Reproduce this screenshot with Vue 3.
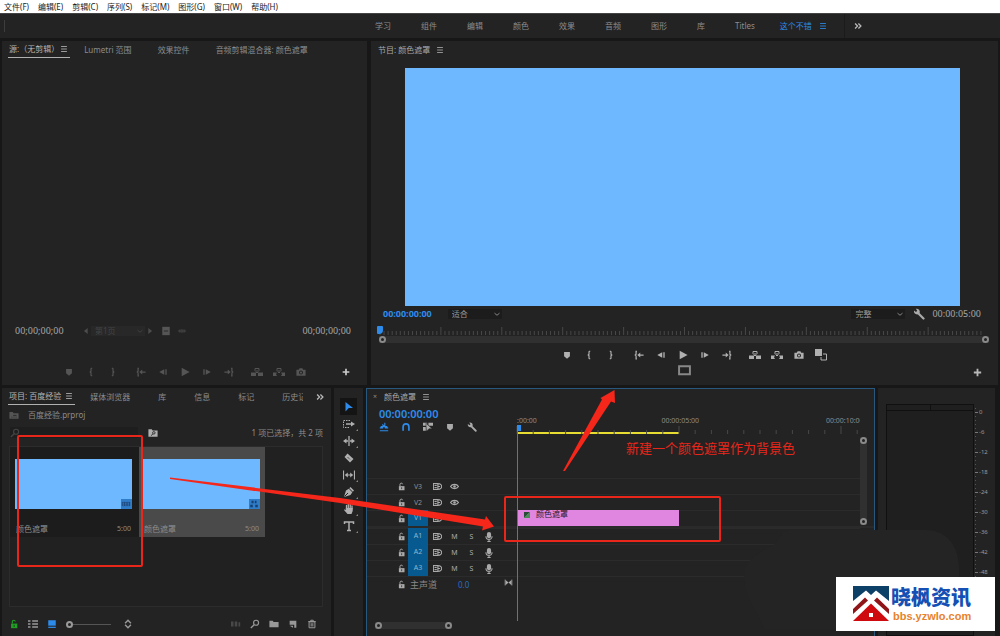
<script setup>
import { h } from 'vue'

const menus = ['文件(F)', '编辑(E)', '剪辑(C)', '序列(S)', '标记(M)', '图形(G)', '窗口(W)', '帮助(H)']
const workspaces = ['学习', '组件', '编辑', '颜色', '效果', '音频', '图形', '库', 'Titles']

const Icon = (props) =>
  h('svg', { class: 'icon', viewBox: '0 0 12 12', 'aria-hidden': 'true' }, [h('use', { href: '#i-' + props.name })])
Icon.props = ['name']

const transport = [
  [['marker', '添加标记'], ['in', '标记入点'], ['out', '标记出点']],
  [['goin', '转到入点'], ['back', '后退一帧'], ['play', '播放'], ['fwd', '前进一帧'], ['goout', '转到出点']],
  [['lift', '提升'], ['extract', '提取'], ['camera', '导出帧']],
]
const tools = [
  ['select', '选择工具'], ['trackselect', '向前选择轨道工具'], ['ripple', '波纹编辑工具'], ['razor', '剃刀工具'],
  ['slip', '外滑工具'], ['pen', '钢笔工具'], ['hand', '手形工具'], ['type', '文字工具'],
]
const clips = [
  { name: '颜色遮罩', time: '5:00', badge: 'strip', active: false },
  { name: '颜色遮罩', time: '5:00', badge: 'seq', active: true },
]
const videoTracks = [{ n: 'V3' }, { n: 'V2' }, { n: 'V1', on: true }]
const audioTracks = ['A1', 'A2', 'A3']
const levels = ['0', '-6', '-12', '-18', '-24', '-30', '-36', '-42', '-48', '-54']
const minor = Array.from({ length: 149 }, (_, i) => i)
const seconds = Array.from({ length: 22 }, (_, i) => i)
</script>

<template>
  <div class="app">
    <svg class="defs" aria-hidden="true">
      <symbol id="i-menu" viewBox="0 0 12 12"><path d="M2.500 3h7M2.500 6h7M2.500 9h7" stroke="currentColor" fill="none" /></symbol>
      <symbol id="i-more" viewBox="0 0 12 12"><path d="M2.500 3l3 3-3 3M6.500 3l3 3-3 3" stroke="currentColor" stroke-width="1.500" fill="none" /></symbol>
      <symbol id="i-marker" viewBox="0 0 12 12"><path d="M2.500 2.500h7V7.500L6 10.500 2.500 7.500z" fill="currentColor" /></symbol>
      <symbol id="i-in" viewBox="0 0 12 12"><path d="M7.500 1.500H6.500L6 2V5L5 6l1 1v3l.5.5h1" stroke="currentColor" stroke-width="1.400" fill="none" /></symbol>
      <symbol id="i-out" viewBox="0 0 12 12"><path d="M4.500 1.500h1l.5.5V5l1 1-1 1v3l-.5.5h-1" stroke="currentColor" stroke-width="1.400" fill="none" /></symbol>
      <symbol id="i-goin" viewBox="0 0 12 12"><path d="M3.500 1.500H2.500V5L1.500 6l1 1v3.500h1M6 6h5.500" stroke="currentColor" stroke-width="1.500" fill="none" /><path d="M4 6l3.500-3v6z" fill="currentColor" /></symbol>
      <symbol id="i-goout" viewBox="0 0 12 12"><path d="M8.500 1.500h1V5l1 1-1 1v3.500h-1M.5 6H6" stroke="currentColor" stroke-width="1.500" fill="none" /><path d="M8 6L4.500 3v6z" fill="currentColor" /></symbol>
      <symbol id="i-back" viewBox="0 0 12 12"><path d="M1.500 6L7.500 2.800v6.400zM8.800 2.800h1.600v6.400H8.800z" fill="currentColor" /></symbol>
      <symbol id="i-fwd" viewBox="0 0 12 12"><path d="M10.500 6L4.500 2.800v6.400zM1.600 2.800h1.600v6.400H1.600z" fill="currentColor" /></symbol>
      <symbol id="i-play" viewBox="0 0 12 12"><path d="M2 1l9.500 5L2 11z" fill="currentColor" /></symbol>
      <symbol id="i-lift" viewBox="0 0 12 12"><path d="M0 6.500h5V10H0zM7 6.500h5V10H7z" fill="currentColor" /><path d="M4 5V2.500h4V5M6 4v3M4.500 5.500L6 7l1.500-1.500" stroke="currentColor" fill="none" /></symbol>
      <symbol id="i-extract" viewBox="0 0 12 12"><path d="M0 6.500h4L3 8.200 4 10H0zM12 6.500H8l1 1.700L8 10h4z" fill="currentColor" /><path d="M4 5V2.500h4V5M6 4v3M4.500 5.500L6 7l1.500-1.500" stroke="currentColor" fill="none" /></symbol>
      <symbol id="i-camera" viewBox="0 0 12 12"><path fill-rule="evenodd" d="M.5 3.200h2.800L4.300 1.500h3.400l1 1.700h2.800v7.300H.5zM6 4.300a2.400 2.400 0 100 4.800 2.400 2.400 0 000-4.800z" fill="currentColor" /><circle cx="6" cy="6.700" r="1.300" fill="currentColor" /></symbol>
      <symbol id="i-compare" viewBox="0 0 12 12"><path d="M0 0h7v7H0z" fill="currentColor" /><path d="M8 5h3.500v6H6V8" stroke="currentColor" fill="none" /></symbol>
      <symbol id="i-monitor" viewBox="0 0 12 12"><path d="M1 2h10v7.500H1z" stroke="currentColor" stroke-width="1.800" fill="none" /></symbol>
      <symbol id="i-plus" viewBox="0 0 12 12"><path d="M6 2v8M2 6h8" stroke="currentColor" stroke-width="2" /></symbol>
      <symbol id="i-chevron" viewBox="0 0 12 12"><path d="M3 5l3 2.500L9 5" stroke="currentColor" fill="none" /></symbol>
      <symbol id="i-left" viewBox="0 0 12 12"><path d="M8 2.500v7L3.500 6z" fill="currentColor" /></symbol>
      <symbol id="i-right" viewBox="0 0 12 12"><path d="M4 2.500v7L8.500 6z" fill="currentColor" /></symbol>
      <symbol id="i-film" viewBox="0 0 12 12"><path d="M1.500 1h9v10h-9z" fill="currentColor" /><path d="M3.500 6h5" stroke="#232323" /></symbol>
      <symbol id="i-wave" viewBox="0 0 12 12"><path d="M1 6h10M3.500 4v4M6 3.500v5M8.500 4v4" stroke="currentColor" /></symbol>
      <symbol id="i-wrench" viewBox="0 0 12 12"><path d="M5 5l5.500 5.500" stroke="currentColor" stroke-width="2.200" stroke-linecap="round" /><path d="M1 2.500l2 1.500 1.200-1.200L2.800.8C5 .3 7.200 1.800 6.800 4.500L5 6.300C2.500 6.800.4 5 1 2.500z" fill="currentColor" /></symbol>
      <symbol id="i-select" viewBox="0 0 12 12"><path d="M2.500 1l7.500 6H5.800L2.500 10.500z" fill="currentColor" /></symbol>
      <symbol id="i-trackselect" viewBox="0 0 12 12"><path d="M7 2.500H.5v7H7" stroke="currentColor" stroke-dasharray="1.500 1" fill="none" /><path d="M3 6h6" stroke="currentColor" stroke-width="1.500" /><path d="M8 3.500L12 6 8 8.500z" fill="currentColor" /></symbol>
      <symbol id="i-ripple" viewBox="0 0 12 12"><path d="M6 1v10M2 6h3M7 6h3" stroke="currentColor" stroke-width="1.300" /><path d="M0 6l3.500-2.500v5zM12 6L8.500 3.500v5z" fill="currentColor" /></symbol>
      <symbol id="i-razor" viewBox="0 0 12 12"><path d="M4.500 1.500l6 5.500-3.500 3.500L1.500 5z" fill="currentColor" /><path d="M4.500 5l3 3" stroke="#232323" stroke-dasharray="1 1" /></symbol>
      <symbol id="i-slip" viewBox="0 0 12 12"><path d="M.5 1.500v9M11.500 1.500v9M3 6h6" stroke="currentColor" stroke-width="1.200" /><path d="M1.800 6l3-2.500v5zM10.200 6l-3-2.500v5z" fill="currentColor" /></symbol>
      <symbol id="i-pen" viewBox="0 0 12 12"><path d="M7.500 1L11 4.500 9.800 5.700 6.300 2.200zM5.800 2.700l3.500 3.500L7.500 9 1 11l2-6.500z" fill="currentColor" /><path d="M1.500 10.500L5 7" stroke="#232323" /></symbol>
      <symbol id="i-hand" viewBox="0 0 12 12"><path d="M3.500 6V2.500M5.300 6V1.500M7.200 6V1.500M9 6V3" stroke="currentColor" stroke-width="1.300" stroke-linecap="round" /><path d="M2.800 5h6.900v3L8.500 11h-4L1 7l.8-.7L3 7z" fill="currentColor" /></symbol>
      <symbol id="i-type" viewBox="0 0 12 12"><path d="M1.500 4V2h9v2M6 2v8.500M4 10.500h4" stroke="currentColor" stroke-width="1.500" fill="none" /></symbol>
      <symbol id="i-lock" viewBox="0 0 12 12"><path d="M2.500 5.500h7.500V11H2.500z" fill="currentColor" /><path d="M4 5.500V3c0-2 3.500-2 3.500 0" stroke="currentColor" stroke-width="1.300" fill="none" /><path d="M6.200 7v2.500" stroke="#232323" /></symbol>
      <symbol id="i-sync" viewBox="0 0 12 12"><path d="M.5 2h6v8h-6zM2 4.500h3M2 7.500h3M7 2.500h2l2.500 2v3L9 9.500H7M7 6h2.500" stroke="currentColor" stroke-width="1.500" fill="none" /></symbol>
      <symbol id="i-eye" viewBox="0 0 12 12"><path d="M.7 6C3 2.300 9 2.300 11.300 6 9 9.700 3 9.700.7 6z" stroke="currentColor" stroke-width="1.600" fill="none" /><circle cx="6" cy="6" r="1.700" fill="currentColor" /></symbol>
      <symbol id="i-mic" viewBox="0 0 12 12"><rect x="3.500" y="0" width="5" height="7.500" rx="2.500" fill="currentColor" /><path d="M2.300 5c0 5 7.400 5 7.400 0M6 8v3M4 11.300h4" stroke="currentColor" stroke-width="1.300" fill="none" /></symbol>
      <symbol id="i-bowtie" viewBox="0 0 12 12"><path d="M1.500 2v8M10.500 2v8" stroke="currentColor" /><path d="M2 2.500L6 6 2 9.500zM10 2.500L6 6l4 3.500z" fill="currentColor" /></symbol>
      <symbol id="i-nest" viewBox="0 0 12 12"><path d="M1 7h4M7 7h4M1 10.500h10M4 3l3 3M7 1v4M2 5.500h8" stroke="currentColor" stroke-width="1.300" /></symbol>
      <symbol id="i-magnet" viewBox="0 0 12 12"><path d="M2.500 10.500V6c0-5 7-5 7 0v4.500" stroke="currentColor" stroke-width="2" fill="none" /></symbol>
      <symbol id="i-link" viewBox="0 0 12 12"><path d="M0 1h5v3.500H0zM6.500 1H12v3.500H6.500zM0 6h3.500v4.500H0z" fill="currentColor" /><path d="M3.500 1.500l7.500 6.500H7.500L4 11z" fill="currentColor" stroke="#232323" stroke-width=".6" /></symbol>
      <symbol id="i-bin" viewBox="0 0 12 12"><path d="M.5 2.500h4l1 1.500h6v6.500H.5z" fill="currentColor" /><path d="M3 8.500h1M5.500 8.500h1M8 8.500h1M5 6.500h4" stroke="#232323" /></symbol>
      <symbol id="i-findbin" viewBox="0 0 12 12"><path d="M.5 1.500h4l1 1.500h6v7.500H.5z" fill="currentColor" /><circle cx="7" cy="5.800" r="1.500" stroke="#232323" fill="none" /><path d="M6 7L3.500 9.300" stroke="#232323" /></symbol>
      <symbol id="i-search" viewBox="0 0 12 12"><circle cx="7.300" cy="4.500" r="3" stroke="currentColor" stroke-width="1.400" fill="none" /><path d="M5 6.800L1 10.800" stroke="currentColor" stroke-width="1.600" /></symbol>
      <symbol id="i-list" viewBox="0 0 12 12"><path d="M0 2.500h3M0 6h3M0 9.500h3M5 2.500h7M5 6h7M5 9.500h7" stroke="currentColor" stroke-width="1.800" /></symbol>
      <symbol id="i-iconview" viewBox="0 0 12 12"><path d="M1.500 1.500h9v6.500h-9z" fill="currentColor" /><path d="M1.500 10h9" stroke="currentColor" stroke-width="1.500" /></symbol>
      <symbol id="i-sort" viewBox="0 0 12 12"><path d="M2.500 5L6 1.500 9.500 5M2.500 7L6 10.500 9.500 7" stroke="currentColor" stroke-width="1.700" fill="none" /></symbol>
      <symbol id="i-auto" viewBox="0 0 12 12"><path d="M0 3h3v6H0zM4.500 3h3v6h-3zM9 4h2v5H9z" fill="currentColor" /></symbol>
      <symbol id="i-folder" viewBox="0 0 12 12"><path d="M.5 2h4l1 1.500h6V10H.5z" fill="currentColor" /></symbol>
      <symbol id="i-new" viewBox="0 0 12 12"><path d="M2 2h8v8.500H7.500V7H2z" fill="currentColor" /><path d="M2 8l4 2.500V8z" fill="currentColor" /></symbol>
      <symbol id="i-trash" viewBox="0 0 12 12"><path d="M1.500 3h9M4.500 2.500V1.500h3v1M2.500 3.500h7v7h-7zM5 5v4M7 5v4" stroke="currentColor" stroke-width="1.200" fill="none" /></symbol>
      <symbol id="i-strip" viewBox="0 0 12 12"><path d="M1 3.500h10v5H1z" fill="#1d4c82" /><path d="M2 5h1.500M5 5h1.500M8 5h1.500M2 7.200h1.500M5 7.200h1.500M8 7.200h1.500" stroke="#4a90d8" /></symbol>
      <symbol id="i-seq" viewBox="0 0 12 12"><path d="M1.500 7h3v3h-3zM7.500 7h3v3h-3zM3 2h2.500v3H3zM7 2h2v3H7z" fill="#173f70" /></symbol>
    </svg>

    <nav class="menubar">
      <button v-for="m in menus" :key="m">{{ m }}</button>
    </nav>

    <header class="workspace">
      <div class="grip"></div>
      <nav class="spaces">
        <button v-for="w in workspaces" :key="w">{{ w }}</button>
        <button class="current">这个不错 <Icon name="menu" /></button>
        <button class="overflow" aria-label="更多工作区"><Icon name="more" /></button>
      </nav>
    </header>

    <main class="main">
      <section class="upper">
        <section class="panel source">
          <div class="tabs">
            <button class="tab active">源:（无剪辑）<Icon name="menu" /></button>
            <button class="tab">Lumetri 范围</button>
            <button class="tab">效果控件</button>
            <button class="tab">音频剪辑混合器: 颜色遮罩</button>
          </div>
          <div class="grow"></div>
          <div class="info">
            <span class="tc">00;00;00;00</span>
            <div class="pager">
              <button aria-label="上一页"><Icon name="left" /></button>
              <label class="pick"><select aria-label="页" disabled><option>第1页</option></select><Icon name="chevron" /></label>
              <button aria-label="下一页"><Icon name="right" /></button>
              <button class="film" aria-label="仅视频"><Icon name="film" /></button>
              <button aria-label="仅音频"><Icon name="wave" /></button>
            </div>
            <span class="tc">00;00;00;00</span>
          </div>
          <div class="transport">
            <div v-for="(g, i) in transport" :key="i" class="group">
              <button v-for="b in g" :key="b[0]" :aria-label="b[1]" :class="b[0]"><Icon :name="b[0]" /></button>
            </div>
            <button class="add" aria-label="按钮编辑器"><Icon name="plus" /></button>
          </div>
        </section>

        <section class="panel program">
          <div class="tabs">
            <button class="tab">节目: 颜色遮罩 <Icon name="menu" /></button>
          </div>
          <div class="video"></div>
          <div class="info">
            <span class="tc blue">00:00:00:00</span>
            <label class="pick fit"><select aria-label="缩放级别"><option>适合</option></select><Icon name="chevron" /></label>
            <div class="grow"></div>
            <label class="pick"><select aria-label="播放分辨率"><option>完整</option></select><Icon name="chevron" /></label>
            <button class="set" aria-label="设置"><Icon name="wrench" /></button>
            <span class="tc">00:00:05:00</span>
          </div>
          <div class="ruler">
            <svg class="ticks" aria-hidden="true">
              <line v-for="i in minor" :key="i" :x1="i / 1.49 + '%'" :x2="i / 1.49 + '%'" :y1="i % 15 ? 4 : 0" y2="8" />
            </svg>
            <i class="head"></i>
          </div>
          <div class="zoombar"><i class="knob"></i><i class="knob"></i></div>
          <div class="transport">
            <div v-for="(g, i) in transport" :key="i" class="group">
              <button v-for="b in g" :key="b[0]" :aria-label="b[1]" :class="b[0]"><Icon :name="b[0]" /></button>
              <button v-if="i === 2" class="compare" aria-label="比较视图"><Icon name="compare" /></button>
            </div>
          </div>
          <div class="second">
            <button aria-label="切换显示"><Icon name="monitor" /></button>
            <button class="add" aria-label="按钮编辑器"><Icon name="plus" /></button>
          </div>
        </section>
      </section>

      <section class="lower">
        <section class="panel project">
          <div class="tabs">
            <button class="tab active">项目: 百度经验 <Icon name="menu" /></button>
            <button class="tab">媒体浏览器</button>
            <button class="tab">库</button>
            <button class="tab">信息</button>
            <button class="tab">标记</button>
            <button class="tab cut">历史记录</button>
            <button class="overflow" aria-label="更多面板"><Icon name="more" /></button>
          </div>
          <div class="path"><Icon name="bin" /><span>百度经验.prproj</span></div>
          <div class="filter">
            <label class="search"><Icon name="search" /><input type="text" aria-label="搜索" /></label>
            <button aria-label="查找素材箱"><Icon name="findbin" /></button>
            <span class="count">1 项已选择，共 2 项</span>
          </div>
          <div class="items">
            <article v-for="(c, i) in clips" :key="i" class="item" :class="{ active: c.active }">
              <div class="thumb"><span class="badge"><Icon :name="c.badge" /></span></div>
              <div class="meta"><span>{{ c.name }}</span><span class="dur">{{ c.time }}</span></div>
            </article>
          </div>
          <div class="footer">
            <button class="green" aria-label="可写"><Icon name="lock" /></button>
            <button aria-label="列表视图"><Icon name="list" /></button>
            <button class="blue" aria-label="图标视图"><Icon name="iconview" /></button>
            <input type="range" min="0" max="100" value="0" aria-label="缩略图大小" />
            <button aria-label="排序图标"><Icon name="sort" /></button>
            <div class="grow"></div>
            <button class="dim" aria-label="自动匹配序列"><Icon name="auto" /></button>
            <button aria-label="查找"><Icon name="search" /></button>
            <button aria-label="新建素材箱"><Icon name="folder" /></button>
            <button aria-label="新建项"><Icon name="new" /></button>
            <button aria-label="清除"><Icon name="trash" /></button>
          </div>
        </section>

        <aside class="panel tools">
          <button v-for="(t, i) in tools" :key="t[0]" :aria-label="t[1]" :class="{ active: i === 0, sub: i !== 0 && i !== 3 }"><Icon :name="t[0]" /></button>
        </aside>

        <section class="panel timeline">
          <div class="tabs">
            <span class="close">×</span>
            <button class="tab">颜色遮罩 <Icon name="menu" /></button>
          </div>
          <div class="tl-top">
            <div class="tl-ctl">
              <span class="tc blue">00:00:00:00</span>
              <div class="toggles">
                <button class="blue" aria-label="嵌套序列"><Icon name="nest" /></button>
                <button class="blue" aria-label="对齐"><Icon name="magnet" /></button>
                <button aria-label="链接选择项"><Icon name="link" /></button>
                <button aria-label="添加标记"><Icon name="marker" /></button>
                <button aria-label="时间轴显示设置"><Icon name="wrench" /></button>
              </div>
            </div>
            <div class="tl-ruler">
              <div class="times"><span>:00:00</span><span>00:00:05:00</span><span>00:00:10:00</span></div>
              <svg class="ticks" aria-hidden="true">
                <line v-for="i in seconds" :key="i" :x1="i * 4.723 + '%'" :x2="i * 4.723 + '%'" :y1="i % 10 ? 4 : 0" y2="8" />
              </svg>
              <div class="work"></div>
              <p class="note">新建一个颜色遮罩作为背景色</p>
            </div>
          </div>
          <div class="tracks">
            <div v-for="t in videoTracks" :key="t.n" class="track">
              <div class="hd">
                <button aria-label="锁定"><Icon name="lock" /></button>
                <button class="name" :class="{ on: t.on }">{{ t.n }}</button>
                <button aria-label="同步锁定"><Icon name="sync" /></button>
                <button aria-label="切换轨道输出"><Icon name="eye" /></button>
              </div>
              <div class="lane"><div v-if="t.on" class="clip"><b></b><span>颜色遮罩</span></div></div>
            </div>
            <div class="split"></div>
            <div v-for="t in audioTracks" :key="t" class="track">
              <div class="hd">
                <button aria-label="锁定"><Icon name="lock" /></button>
                <button class="name on">{{ t }}</button>
                <button aria-label="同步锁定"><Icon name="sync" /></button>
                <button>M</button>
                <button>S</button>
                <button class="mic" aria-label="画外音录制"><Icon name="mic" /></button>
              </div>
              <div class="lane"></div>
            </div>
            <div class="track">
              <div class="hd master">
                <button aria-label="锁定"><Icon name="lock" /></button>
                <span>主声道</span>
                <span class="gain">0.0</span>
                <button aria-label="折叠"><Icon name="bowtie" /></button>
              </div>
              <div class="lane"></div>
            </div>
          </div>
          <div class="grow"></div>
          <div class="tl-scroll"><div class="thumbbar"><i class="knob"></i><i class="knob"></i></div></div>
          <div class="playhead"></div>
          <div class="vscroll"><i class="knob"></i><i class="knob"></i></div>
        </section>

        <section class="panel meters">
          <div class="meter"><div class="peaks"><i></i><i></i></div></div>
          <div class="scale"><span v-for="l in levels" :key="l">{{ l }}</span></div>
        </section>
      </section>
    </main>

    <svg class="overlay" viewBox="0 0 1000 636" preserveAspectRatio="none" aria-hidden="true">
      <path d="M790 530H925C950 530 960 550 959 572V629H764C758 610 744 600 744 575C744 558 765 550 775 544C780 536 784 530 790 530z" fill="#242424" />
      <g fill="none" stroke="#e8261a" stroke-width="2">
        <rect x="18" y="436" width="124" height="130" rx="1" />
        <rect x="505" y="497" width="215" height="44" rx="1" />
      </g>
      <g fill="#f5261a">
        <path d="M170 477.500L340 498 485 519.500 486 516 494 526.500 482 530.500 483 526.500 340 503 170 479z" />
        <path d="M563 471L602 399.500 600.500 398 614.500 390 615 403 611 401.500 565 471z" />
      </g>
    </svg>

    <aside class="brand">
      <svg viewBox="0 0 36 36" aria-hidden="true">
        <path d="M0 0h36v15L23 4.500 18 9 13 4.500 0 15z" fill="#0d4067" />
        <path d="M0 23L12 11.500l3 3L0 28zM36 23L24 11.500l-3 3L36 28z" fill="#8f1518" />
        <path d="M0 35L18 17.500 36 35z" fill="#cf0a0f" />
        <path d="M16 27h4v4h-4z" fill="#fff" />
      </svg>
      <div><strong>晓枫资讯</strong><a href="#">bbs.yzwlo.com</a></div>
    </aside>
  </div>
</template>

<style>
body {
  margin: 0;
  background: #161616;
}
</style>

<style scoped>
.app {
  position: relative;
  display: flex;
  flex-direction: column;
  height: 100vh;
  min-height: 600px;
  overflow: hidden;
  background: #171717;
  color: #8c8c8c;
  font: 8px/12px "Noto Sans", "Noto Sans CJK SC", sans-serif;
}
.defs { position: absolute; width: 0; height: 0; }
:deep(.icon) { width: 10px; height: 10px; flex: none; display: block; }
button {
  display: flex;
  align-items: center;
  justify-content: center;
  padding: 0;
  border: 0;
  background: none;
  color: inherit;
  font: inherit;
  white-space: nowrap;
}
.grow { flex: 1; }

.menubar {
  display: flex;
  gap: 9px;
  height: 13px;
  padding-left: 4px;
  background: #fff;
  color: #222;
}

.workspace {
  display: grid;
  grid-template-columns: 369fr 629fr;
  height: 25px;
  padding: 0 0 0 2px;
  border-top: 1px solid #444;
  box-sizing: border-box;
  background: #232323;
}
.grip { width: 1px; height: 12px; margin: 6px 2px; background: #3d3d3d; }
.spaces { display: flex; align-items: center; gap: 30px; padding-left: 4px; }
.spaces .current { margin-left: -5px; color: #2d8ceb; gap: 6px; }
.spaces .overflow { height: 24px; margin-left: -14px; padding-left: 8px; border-left: 1px solid #1b1b1b; color: #bbb; }

.main {
  flex: 1;
  min-height: 0;
  display: grid;
  grid-template-rows: minmax(0, 344fr) minmax(0, 248fr);
  gap: 3px;
  padding-top: 3px;
}
.upper { display: grid; grid-template-columns: minmax(0, 365fr) minmax(0, 627fr); gap: 4px; padding: 0 2px; }
.lower { display: grid; grid-template-columns: minmax(0, 329fr) 29px minmax(0, 509fr) 117px; gap: 3px; padding: 0 5px 0 2px; }
.panel { display: flex; flex-direction: column; min-width: 0; min-height: 0; background: #232323; }

.tabs { display: flex; height: 18px; flex: none; padding: 0 6px; }
.tab { position: relative; height: 17px; padding: 0 1px; gap: 3px; }
.tab.active { color: #b4b4b4; border-bottom: 1px solid #b0b0b0; }
.source .tab { margin-right: 13px; }
.source .tab.active { gap: 0; }
.source .tab:nth-child(n + 2) { margin-right: 24px; }
.program .tab, .timeline .tab { color: #a8a8a8; gap: 5px; }
.project .tab.active { margin-right: 14px; }
.project .tab:nth-child(n + 2) { margin-right: 26px; }
.project .tab.cut { width: 25px; margin-right: 12px; overflow: hidden; justify-content: flex-start; }
.overflow { color: #bbb; }

.info { display: flex; align-items: center; height: 16px; flex: none; }
.tc { font-size: 9px; font-weight: 500; color: #999; }
.blue { color: #2d8ceb; }
.tc.blue { font-weight: 700; }
.pick { display: flex; align-items: center; width: 54px; height: 10px; background: #1c1c1c; color: #999; }
.pick select {
  flex: 1;
  min-width: 0;
  height: 10px;
  padding: 0 0 0 4px;
  border: 0;
  appearance: none;
  background: none;
  color: inherit;
  font: inherit;
  line-height: 10px;
  opacity: 1;
}
.source .info { justify-content: space-between; margin-bottom: 24px; padding: 0 16px 0 13px; }
.pager { display: flex; align-items: center; margin-right: 98px; color: #4c4c4c; }
.pager .pick { background: #282828; color: #444; }
.pager .film { margin: 0 6px; color: #555; }

.transport { position: relative; display: flex; justify-content: center; gap: 6px; height: 18px; flex: none; color: #b0b0b0; }
.group { display: flex; }
.group button { width: 22px; }
.lift :deep(.icon), .extract :deep(.icon), .compare :deep(.icon) { width: 12px; height: 12px; }
.source .transport { margin-bottom: 4px; color: #555; }
.add { position: absolute; top: 4px; right: 16px; color: #ccc; }

.video { flex: 1; margin: 9px 38px 0 34px; background: #6eb8ff; }
.program .info { padding: 0 17px 0 12px; }
.fit { margin-left: 16px; }
.set { margin: 0 7px 0 8px; color: #aaa; }
.program .set :deep(.icon) { width: 12px; height: 12px; }
.ruler { position: relative; height: 9px; margin: 5px 13px 0 9px; flex: none; }
.ticks { display: block; width: 100%; height: 8px; overflow: visible; }
.ticks line { stroke: #484848; stroke-width: 1; }
.head { position: absolute; left: -3px; top: -1px; width: 6px; height: 8px; border-radius: 1px 1px 4px 1px; background: #2d8ceb; }
.zoombar { display: flex; justify-content: space-between; align-items: center; height: 7px; margin: 0 9px 3px 8px; flex: none; background: #303030; }
.knob { width: 3px; height: 3px; border: 2px solid #8a8a8a; border-radius: 50%; background: #232323; }
.program .transport { padding-left: 18px; }
.second { position: relative; display: flex; justify-content: center; align-items: flex-start; height: 21px; flex: none; color: #888; }
.second :deep(.icon) { width: 13px; height: 13px; }
.second .add { top: 3px; right: 15px; color: #b8b8b8; }
.second .add :deep(.icon) { width: 11px; height: 11px; }

.path { display: flex; align-items: center; gap: 9px; height: 18px; padding-left: 7px; flex: none; }
.path :deep(.icon) { color: #555; }
.filter { display: flex; align-items: center; height: 17px; padding: 0 8px; flex: none; }
.filter button { margin-left: 10px; color: #b0b0b0; }
.search { display: flex; align-items: center; gap: 2px; width: 128px; height: 11px; background: #1e1e1e; color: #444; }
.search input { flex: 1; min-width: 0; height: 11px; padding: 0; border: 0; outline: 0; background: none; color: #999; font: inherit; }
.count { margin-left: auto; }
.items { display: flex; flex: 1; min-height: 0; align-items: flex-start; margin: 5px 8px 5px 7px; border: 1px solid #2c2c2c; background: #212121; }
.item { flex: 0 0 129px; box-sizing: border-box; height: 90px; padding: 12px 7px 0 5px; background: #1c1c1c; }
.item.active { flex-basis: 126px; padding: 12px 5px 0 4px; background: #4a4a4a; }
.thumb { display: flex; align-items: flex-end; justify-content: flex-end; height: 50px; background: #6eb8ff; }
.badge { display: flex; width: 11px; height: 10px; background: #2f7cc8; }
.meta { display: flex; justify-content: space-between; padding: 14px 1px 0; }
.dur { font-size: 7px; }
.footer { display: flex; align-items: center; height: 24px; padding: 0 14px 0 7px; flex: none; color: #999; }
.footer button { width: 10px; margin-right: 9px; }
.footer button:last-child { margin-right: 0; }
.footer .green { color: #1fa022; }
.footer .blue { color: #2d8ceb; }
.footer .dim { color: #484848; }
.footer input { appearance: none; width: 45px; height: 10px; margin: 0 12px 0 0; background: linear-gradient(#555, #555) 0 5px / 100% 1px no-repeat; }
.footer input::-webkit-slider-thumb { appearance: none; width: 7px; height: 7px; box-sizing: border-box; border: 2px solid #999; border-radius: 50%; background: #232323; }

.tools { align-items: center; padding-top: 10px; color: #b0b0b0; }
.tools button { position: relative; width: 17px; height: 17px; }
.tools :deep(.icon) { width: 12px; height: 12px; }
.tools .active { background: #141414; color: #2d8ceb; }
.tools .sub::after { content: ""; position: absolute; right: -1px; bottom: 1px; border: 1px solid #888; border-top-color: transparent; border-left-color: transparent; }

.timeline { position: relative; border: 1px solid #29587f; border-bottom: 0; box-sizing: border-box; }
.timeline .tabs { height: 17px; gap: 6px; }
.timeline .tab { height: 15px; }
.close { line-height: 15px; font-size: 7px; }
.tl-top { display: flex; height: 72px; flex: none; }
.tl-ctl { flex: 0 0 150px; box-sizing: border-box; padding-left: 12px; }
.tl-ctl .tc { display: block; height: 16px; line-height: 15px; font-size: 11px; font-weight: 600; }
.toggles { display: flex; gap: 12px; color: #aaa; }
.tl-ruler { position: relative; flex: 1; min-width: 0; margin-right: 14px; }
.times { display: grid; grid-template-columns: 144fr 164fr 34fr; height: 11px; padding-top: 9px; font-size: 7px; line-height: 11px; }
.times span { overflow: hidden; white-space: nowrap; }
.work { width: 47.3%; height: 2px; background: #e6dc32; margin-top: -2px; }
.note { position: absolute; left: 109px; top: 33px; margin: 0; color: #e8261a; font-size: 13px; line-height: 18px; white-space: nowrap; }
.track { display: flex; height: 16px; }
.hd {
  display: grid;
  grid-template-columns: 13px 20px 18px 17px 17px 17px;
  flex: 0 0 150px;
  box-sizing: border-box;
  padding-left: 28px;
  border-top: 1px solid #2b2b2b;
  font-size: 7px;
  color: #aaa;
}
.hd :deep(.icon) { width: 9px; height: 9px; }
.hd .name { color: #909090; }
.hd .name.on { margin-top: -1px; background: #065a8f; color: #8fb5d0; }
.hd .mic :deep(.icon) { width: 10px; height: 10px; }
.hd.master { grid-template-columns: 13px 42px 28px 1fr; align-items: center; font-size: 9px; }
.hd.master span { padding-left: 2px; color: #888; }
.hd.master .gain { padding-left: 8px; color: #2d6cc0; font-size: 8px; }
.hd.master button:last-child { justify-content: flex-end; padding: 0 4px 4px 0; }
.lane { flex: 1; margin-right: 14px; border-top: 1px solid #2b2b2b; }
.clip { display: flex; align-items: flex-start; gap: 6px; width: 47.3%; height: 16px; padding-left: 7px; margin-top: -1px; box-sizing: border-box; background: #e085e0; color: #2a1a2a; line-height: 8px; }
.clip b { width: 6px; height: 6px; margin-top: 2px; background: linear-gradient(135deg, #2c4a38 50%, #4d8a5a 50%); }
.split { height: 2px; background: #2a2a2a; }
.tl-scroll { display: flex; height: 22px; align-items: center; padding: 0 14px 0 8px; flex: none; }
.thumbbar { display: flex; justify-content: space-between; align-items: center; width: 77px; height: 7px; background: #303030; }
.playhead { position: absolute; left: 150px; top: 38px; bottom: 15px; width: 1px; background: #3580c4; }
.playhead::before { content: ""; position: absolute; left: 0; top: -2px; width: 4px; height: 6px; background: #2d8ceb; }
.vscroll { position: absolute; right: 7px; top: 48px; display: flex; flex-direction: column; justify-content: space-between; width: 7px; height: 88px; background: #303030; }

.meters { flex-direction: row; padding: 16px 0 0 8px; }
.meter { flex: 1; border: 1px solid #101010; background: #1f1f1f; }
.peaks { display: flex; height: 5px; border-bottom: 1px solid #101010; }
.peaks i { flex: 1; }
.peaks i + i { border-left: 1px solid #101010; }
.scale { width: 21px; font-size: 6px; line-height: 8px; overflow: hidden; padding-top: 4px; color: #999; }
.scale span { display: block; height: 20px; padding-left: 5px; background: linear-gradient(#777, #777) 1px 4px / 3px 1px no-repeat, repeating-linear-gradient(#555 0 1px, transparent 1px 4px) 1px 0 / 1px 100% no-repeat; }

.overlay { position: absolute; inset: 0; width: 100%; height: 100%; pointer-events: none; }
.brand { position: absolute; right: 5px; bottom: 5px; display: flex; align-items: center; gap: 2px; width: 142px; height: 54px; padding-left: 17px; background: #fff; }
.brand svg { width: 36px; height: 36px; flex: none; }
.brand div { display: flex; flex-direction: column; }
.brand strong { color: #1550b4; font-size: 20px; line-height: 24px; font-weight: 900; white-space: nowrap; }
.brand a { padding-left: 2px; color: #e8822c; font: bold 11px/13px "Liberation Sans", sans-serif; text-decoration: none; }
</style>
